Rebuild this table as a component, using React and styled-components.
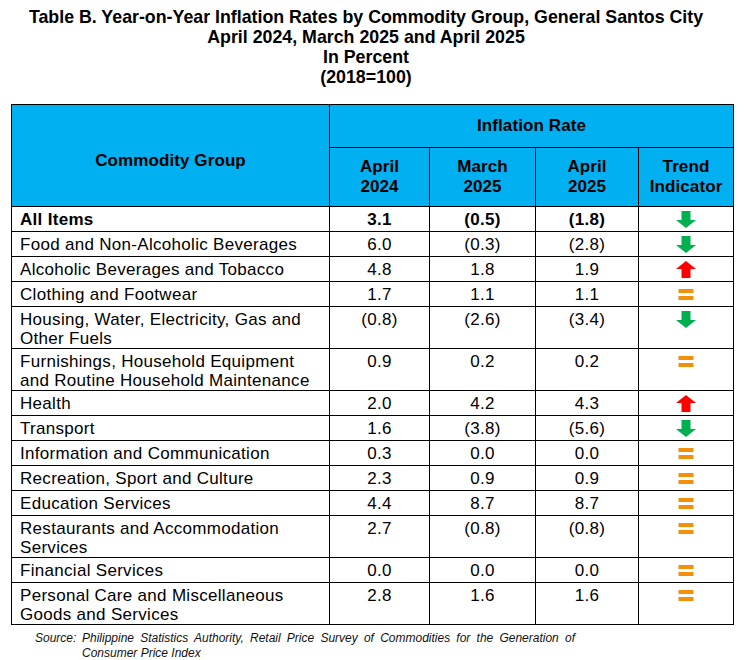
import React from "react";
import styled, { createGlobalStyle } from "styled-components";

const Global = createGlobalStyle`
  html, body { margin: 0; padding: 0; background: #ffffff; }
  body { font-family: "Liberation Sans", Arial, sans-serif; color: #000; }
`;

const Page = styled.div`
  width: 745px;
  padding: 7px 0 0 0;
  box-sizing: border-box;
`;

const Title = styled.div`
  width: 732px;
  text-align: center;
  font-weight: bold;
  font-size: 17.8px;
  line-height: 20px;
`;

const Table = styled.table`
  margin: 17px 0 0 11px;
  width: 722px;
  border-collapse: collapse;
  table-layout: fixed;
  font-size: 17px;
  letter-spacing: 0.3px;
`;

const Col = styled.col`
  width: ${(p) => p.$w}px;
`;

const HeadRow = styled.tr`
  height: ${(p) => p.$h}px;
`;

const Row = styled.tr`
  height: 25px;
`;

const HeadCell = styled.th`
  background: #00b0f0;
  border: 1px solid #000;
  font-weight: bold;
  line-height: 20px;
  letter-spacing: 0.1px;
  text-align: center;
  vertical-align: middle;
  padding: ${(p) => p.$pad || "0"};
`;

const NameCell = styled.td`
  border: 1px solid #000;
  padding: 3px 4px 0 8px;
  line-height: 19px;
  vertical-align: top;
  white-space: nowrap;
  font-weight: ${(p) => (p.$bold ? "bold" : "normal")};
`;

const ValueCell = styled.td`
  border: 1px solid #000;
  padding: 3px 0 0 0;
  line-height: 19px;
  text-align: center;
  vertical-align: top;
  font-weight: ${(p) => (p.$bold ? "bold" : "normal")};
`;

const TrendCell = styled.td`
  border: 1px solid #000;
  padding: 4px 0 0 0;
  text-align: center;
  vertical-align: top;
  line-height: 0;
`;

const Icon = styled.svg`
  display: inline-block;
`;

const Source = styled.div`
  display: grid;
  grid-template-columns: 47px 493px;
  margin: 6px 0 0 35px;
  font-style: italic;
  font-size: 12px;
  line-height: 15px;
  color: #111;
`;

const SourceText = styled.div`
  text-align: justify;
  text-align-last: left;
`;

const Down = () => (
  <Icon width="20" height="17" viewBox="0 0 20 17">
    <polygon points="5.5,0 14.5,0 14.5,9 20,9 10,17 0,9 5.5,9" fill="#00b050" />
  </Icon>
);

const Up = () => (
  <Icon width="20" height="17" viewBox="0 0 20 17">
    <polygon points="10,0 20,8 14.5,8 14.5,17 5.5,17 5.5,8 0,8" fill="#ff0000" />
  </Icon>
);

const Same = () => (
  <Icon width="20" height="17" viewBox="0 0 20 17">
    <rect x="2.5" y="3" width="15" height="4" fill="#f2900c" />
    <rect x="2.5" y="10" width="15" height="4" fill="#f2900c" />
  </Icon>
);

const rows = [
  { name: ["All Items"], v: ["3.1", "(0.5)", "(1.8)"], t: "down", bold: true },
  { name: ["Food and Non-Alcoholic Beverages"], v: ["6.0", "(0.3)", "(2.8)"], t: "down" },
  { name: ["Alcoholic Beverages and Tobacco"], v: ["4.8", "1.8", "1.9"], t: "up" },
  { name: ["Clothing and Footwear"], v: ["1.7", "1.1", "1.1"], t: "same" },
  { name: ["Housing, Water, Electricity, Gas and", "Other Fuels"], v: ["(0.8)", "(2.6)", "(3.4)"], t: "down" },
  { name: ["Furnishings, Household Equipment", "and Routine Household Maintenance"], v: ["0.9", "0.2", "0.2"], t: "same" },
  { name: ["Health"], v: ["2.0", "4.2", "4.3"], t: "up" },
  { name: ["Transport"], v: ["1.6", "(3.8)", "(5.6)"], t: "down" },
  { name: ["Information and Communication"], v: ["0.3", "0.0", "0.0"], t: "same" },
  { name: ["Recreation, Sport and Culture"], v: ["2.3", "0.9", "0.9"], t: "same" },
  { name: ["Education Services"], v: ["4.4", "8.7", "8.7"], t: "same" },
  { name: ["Restaurants and Accommodation", "Services"], v: ["2.7", "(0.8)", "(0.8)"], t: "same" },
  { name: ["Financial Services"], v: ["0.0", "0.0", "0.0"], t: "same" },
  { name: ["Personal Care and Miscellaneous", "Goods and Services"], v: ["2.8", "1.6", "1.6"], t: "same" },
];

const trendIcon = (t) => (t === "down" ? <Down /> : t === "up" ? <Up /> : <Same />);

export default function App() {
  return (
    <>
      <Global />
      <Page>
        <Title>
          Table B. Year-on-Year Inflation Rates by Commodity Group, General Santos City
          <br />
          April 2024, March 2025 and April 2025
          <br />
          In Percent
          <br />
          (2018=100)
        </Title>
        <Table>
          <colgroup>
            <Col $w={318} />
            <Col $w={100} />
            <Col $w={106} />
            <Col $w={103} />
            <Col $w={95} />
          </colgroup>
          <thead>
            <HeadRow $h={43}>
              <HeadCell rowSpan={2} $pad="10px 0 0 0">Commodity Group</HeadCell>
              <HeadCell colSpan={4}>Inflation Rate</HeadCell>
            </HeadRow>
            <HeadRow $h={59}>
              <HeadCell>April<br />2024</HeadCell>
              <HeadCell>March<br />2025</HeadCell>
              <HeadCell>April<br />2025</HeadCell>
              <HeadCell>Trend<br />Indicator</HeadCell>
            </HeadRow>
          </thead>
          <tbody>
            {rows.map((r) => (
              <Row key={r.name[0]}>
                <NameCell $bold={r.bold}>
                  {r.name.map((line, i) => (
                    <React.Fragment key={i}>
                      {i > 0 && <br />}
                      {line}
                    </React.Fragment>
                  ))}
                </NameCell>
                {r.v.map((val, i) => (
                  <ValueCell key={i} $bold={r.bold}>{val}</ValueCell>
                ))}
                <TrendCell>{trendIcon(r.t)}</TrendCell>
              </Row>
            ))}
          </tbody>
        </Table>
        <Source>
          <div>Source:</div>
          <SourceText>
            Philippine Statistics Authority, Retail Price Survey of Commodities for the Generation of Consumer Price Index
          </SourceText>
        </Source>
      </Page>
    </>
  );
}
